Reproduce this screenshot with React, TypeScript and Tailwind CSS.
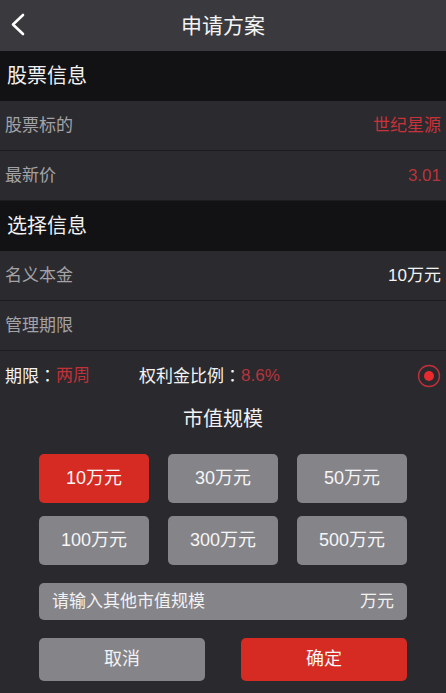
import React from "react";

const font = { fontFamily: '"Liberation Sans", "Noto Sans CJK SC", sans-serif' };
const tc = { fontFamily: '"Noto Sans CJK TC", sans-serif' };

function Row({ label, value, valueClass }: { label: string; value?: string; valueClass?: string }) {
  return (
    <div className="flex h-[50px] items-center justify-between border-b border-[#1d1c20] bg-[#2b2a2e] pl-[5px] pr-[5px]">
      <span className="text-[17px] text-[#a3a2a6]">{label}</span>
      {value && <span className={`text-[17px] ${valueClass}`}>{value}</span>}
    </div>
  );
}

function Section({ title }: { title: string }) {
  return (
    <div className="flex h-[50px] items-center bg-[#121114] pl-[7px]">
      <span className="text-[20px] text-[#f2f2f2]">{title}</span>
    </div>
  );
}

export default function App() {
  const amounts = ["10万元", "30万元", "50万元", "100万元", "300万元", "500万元"];
  return (
    <div className="flex h-[693px] w-[446px] flex-col overflow-hidden bg-[#2a292e]" style={font}>
      <div className="relative flex h-[51px] items-center justify-center bg-[#3a3a3e]">
        <svg className="absolute left-[8px] top-[12px]" width="20" height="26" viewBox="0 0 20 26">
          <path d="M15 3 L5 12.5 L15 22" fill="none" stroke="#ffffff" strokeWidth="2.6" strokeLinecap="round" strokeLinejoin="round" />
        </svg>
        <span className="text-[21px] text-[#f4f4f4]">申请方案</span>
      </div>
      <Section title="股票信息" />
      <Row label="股票标的" value="世纪星源" valueClass="text-[#c8323a]" />
      <Row label="最新价" value="3.01" valueClass="text-[#b8343b]" />
      <Section title="选择信息" />
      <Row label="名义本金" value="10万元" valueClass="text-[#f4f4f4]" />
      <Row label="管理期限" />
      <div className="flex h-[50px] items-center pl-[5px] pr-[5px]">
        <span className="text-[17px] text-[#f2f2f2]">
          期限<span style={tc}>：</span>
        </span>
        <span className="text-[17px] text-[#c0323a]">两周</span>
        <span className="ml-[49px] text-[17px] text-[#f2f2f2]">
          权利金比例<span style={tc}>：</span>
        </span>
        <span className="text-[17px] text-[#b8343b]">8.6%</span>
        <svg className="ml-auto" width="24" height="24" viewBox="0 0 24 24">
          <circle cx="12" cy="12" r="10.5" fill="none" stroke="#c0303a" strokeWidth="1.4" />
          <circle cx="12" cy="12" r="5" fill="#ea2a2e" />
        </svg>
      </div>
      <div className="flex h-[36px] items-center justify-center">
        <span className="text-[20px] text-[#f2f2f2]">市值规模</span>
      </div>
      <div className="mt-[17px] px-[39px]">
        <div className="grid grid-cols-3 gap-x-[19px] gap-y-[13px]">
          {amounts.map((a, i) => (
            <div
              key={a}
              className={`flex h-[49px] items-center justify-center rounded-[5px] text-[18px] text-[#f6f6f6] ${
                i === 0 ? "bg-[#d52b23]" : "bg-[#858489]"
              }`}
            >
              {a}
            </div>
          ))}
        </div>
        <div className="mt-[18px] flex h-[37px] items-center justify-between rounded-[5px] bg-[#858489] pl-[13px] pr-[13px]">
          <span className="text-[17px] text-[#f2f2f2]">请输入其他市值规模</span>
          <span className="text-[17px] text-[#f2f2f2]">万元</span>
        </div>
        <div className="mt-[18px] flex justify-between">
          <div className="flex h-[43px] w-[166px] items-center justify-center rounded-[5px] bg-[#858489] text-[18px] text-[#f2f2f2]">
            取消
          </div>
          <div className="flex h-[43px] w-[166px] items-center justify-center rounded-[5px] bg-[#d52b23] text-[18px] text-[#f6f6f6]">
            确定
          </div>
        </div>
      </div>
    </div>
  );
}
